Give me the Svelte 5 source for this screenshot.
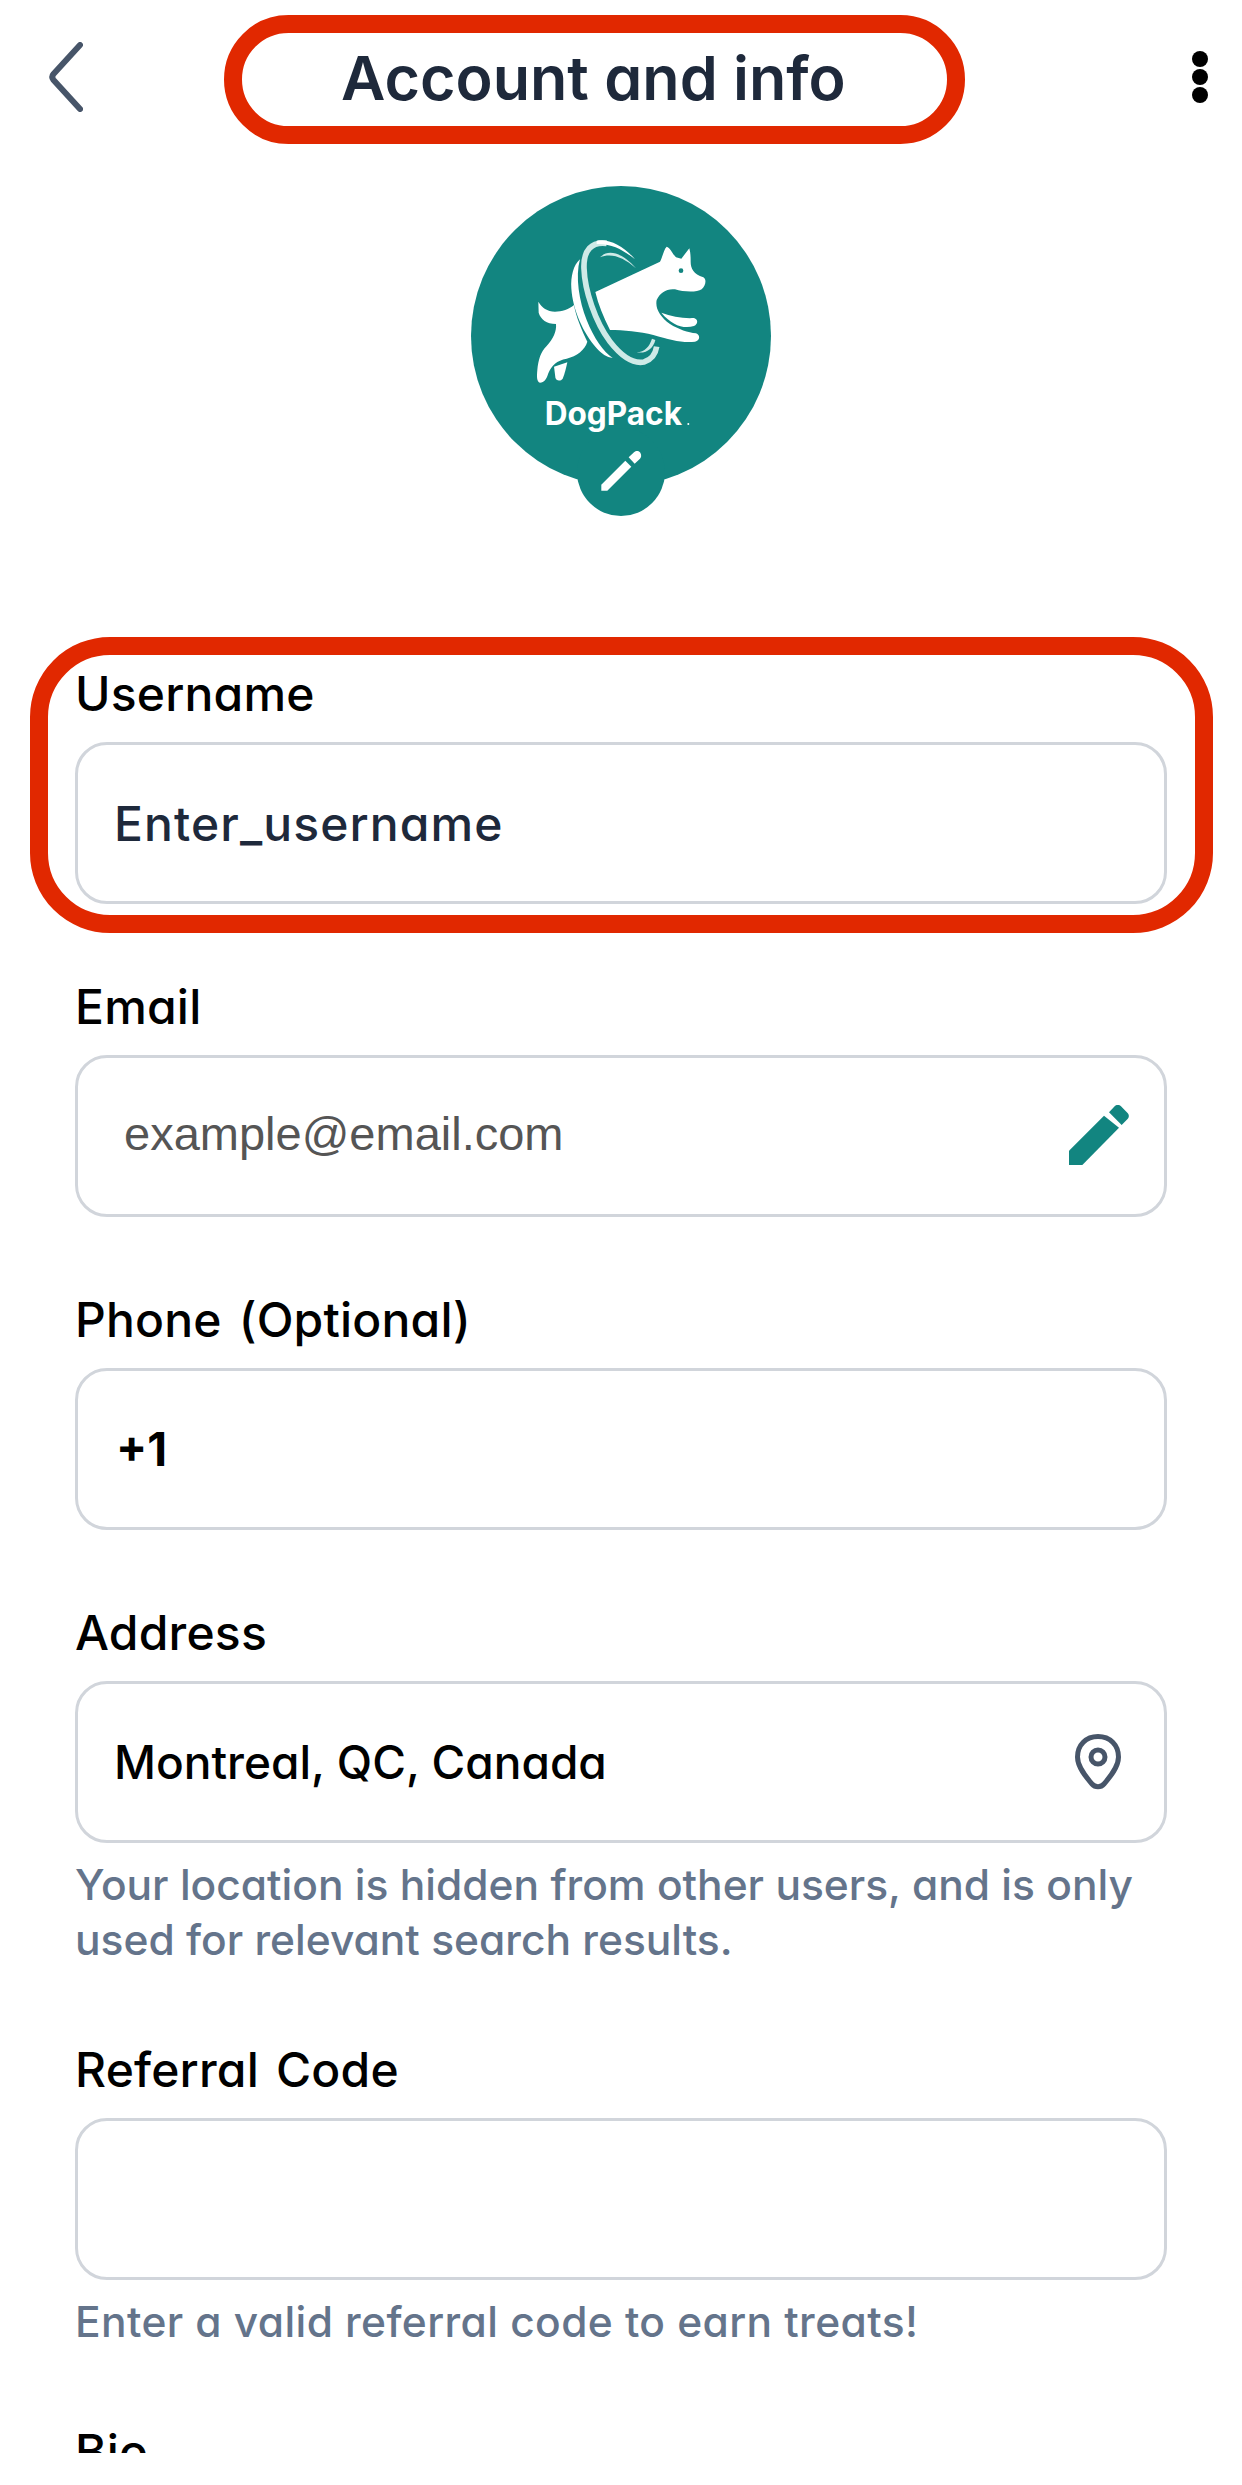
<script>
  const teal = '#128580';
</script>

<div class="page">
  <header class="top">
    <svg class="back" viewBox="0 0 34 70" width="34" height="70" aria-hidden="true">
      <path d="M31 3 L4.5 32 Q2 35 4.5 38 L31 67" fill="none" stroke="#475569" stroke-width="6" stroke-linecap="round" stroke-linejoin="round"/>
    </svg>
    <h1>Account and info</h1>
    <div class="dots"><i></i><i></i><i></i></div>
  </header>

  <svg class="avatar" viewBox="0 0 1080 1080" width="360" height="360">
    <circle cx="543" cy="498" r="450" fill={teal}/>
    <circle cx="543" cy="906" r="132" fill={teal}/>
    <!-- hind quarters -->
    <path fill="#fff" d="M295 395 C305 412 322 425 345 425 C365 425 388 418 402 405 C408 440 425 480 442 515 C435 540 410 558 380 566 C350 572 335 585 325 610 C320 628 312 638 300 638 C290 636 290 620 292 600 C295 570 302 545 320 528 C340 505 350 485 348 462 C320 462 302 448 296 428 Z"/>
    <path fill="#fff" d="M342 590 L382 577 C378 595 374 612 368 626 C362 634 348 634 346 622 Z"/>
    <!-- front of the body -->
    <path fill="#fff" d="M466 366 L660 275 C668 262 670 240 680 230 C690 232 698 252 708 262 L724 266 L748 235 C752 250 752 262 752 276 C752 295 760 312 790 322 C800 328 798 345 785 358 C770 368 730 366 705 358 C680 355 660 368 650 390 C645 415 660 440 690 462 C715 478 745 488 768 490 C782 495 780 512 765 515 C730 520 690 510 640 495 C600 485 550 480 510 480 C490 440 475 405 466 366 Z"/>
    <path fill="#fff" d="M664 428 C695 440 730 446 762 444 C775 448 775 462 762 468 C730 478 695 465 664 428 Z"/>
    <circle cx="723" cy="302" r="7" fill={teal}/>
    <!-- hoop -->
    <path fill="none" stroke="#cfeae7" stroke-width="17" d="M500 220 C455 214 430 240 432 295 C434 360 465 455 510 515 C545 560 580 582 612 576 C632 570 646 555 650 530"/>
    <path fill="#fff" d="M420 268 C400 285 392 320 394 355 C398 420 430 490 470 535 C485 552 500 562 518 564 C490 545 462 505 440 450 C418 395 405 320 420 268 Z"/>
    <path fill="#fff" d="M470 212 C510 205 555 232 585 268 C550 240 515 220 470 222 Z"/>
    <path fill="#cfeae7" d="M480 262 C505 235 550 250 588 295 C550 262 515 248 480 262 Z"/>
    <path fill="#cfeae7" d="M590 547 C615 545 628 530 636 506 L646 510 C640 535 620 552 590 547 Z"/>
    <text x="314" y="765" class="brand" textLength="412" lengthAdjust="spacingAndGlyphs">DogPack</text>
    <circle cx="745" cy="762" r="3" fill="#fff"/>
    <!-- pen -->
    <path fill="#fff" d="M484 944 L556 872 L574 890 L502 962 L484 962 Z"/>
    <path fill="#fff" d="M566 862 L582 847 C588 841 597 842 601 848 C605 855 604 862 600 866 L584 881 Z"/>
  </svg>

  <section class="field">
    <div class="label">Username</div>
    <div class="box"><span class="val dark">Enter_username</span></div>
  </section>

  <section class="field">
    <div class="label">Email</div>
    <div class="box">
      <span class="val email">example@email.com</span>
      <svg class="pen" viewBox="85 78 180 180" width="60" height="60" aria-hidden="true">
        <path fill={teal} d="M85 215 L190 110 L235 146 L125 258 L85 258 Z"/>
        <path fill={teal} d="M205 100 L222 82 C227 76 236 76 241 82 L260 101 C266 107 266 115 260 121 L243 138 Z"/>
      </svg>
    </div>
  </section>

  <section class="field">
    <div class="label">Phone (Optional)</div>
    <div class="box"><span class="val phone">+1</span></div>
  </section>

  <section class="field">
    <div class="label">Address</div>
    <div class="box">
      <span class="val">Montreal, QC, Canada</span>
      <svg class="pin" viewBox="0 0 46 56" width="46" height="56" aria-hidden="true">
        <path d="M23 2.5 C11 2.5 2.5 11 2.5 23 C2.5 33 11 43 17 50 C20 53.5 26 53.5 29 50 C35 43 43.5 33 43.5 23 C43.5 11 35 2.5 23 2.5 Z" fill="none" stroke="#475569" stroke-width="5"/>
        <circle cx="23" cy="23" r="7" fill="none" stroke="#475569" stroke-width="5"/>
      </svg>
    </div>
    <p class="help">Your location is hidden from other users, and is only used for relevant search results.</p>
  </section>

  <section class="field">
    <div class="label">Referral Code</div>
    <div class="box"></div>
    <p class="help wide">Enter a valid referral code to earn treats!</p>
  </section>

  <section class="field">
    <div class="label">Bio</div>
  </section>

  <div class="mark mark-title"></div>
  <div class="mark mark-user"></div>
</div>

<style>
  :global(body) {
    margin: 0;
    background: #fff;
  }
  .page {
    position: relative;
    height: 2453px;
    overflow: hidden;
    font-family: Inter, "Liberation Sans", sans-serif;
    font-feature-settings: "cv11" 1;
    color: #000;
    background: #fff;
  }
  .top {
    display: flex;
    align-items: center;
    height: 154px;
    padding: 0 34px 0 49px;
  }
  .back {
    flex: none;
  }
  h1 {
    margin: 2px 0 0 258px;
    font-size: 61px;
    font-weight: 600;
    line-height: 72px;
    color: #1e293b;
    white-space: nowrap;
  }
  .dots {
    margin-left: auto;
    display: flex;
    flex-direction: column;
    gap: 2px;
  }
  .dots i {
    display: block;
    width: 16px;
    height: 16px;
    border-radius: 50%;
    background: #000;
  }
  .avatar {
    display: block;
    margin: 16px 0 0 440px;
  }
  .field {
    margin: 0 75px 74px;
  }
  .avatar + .field {
    margin-top: 135px;
  }
  .label {
    font-size: 48px;
    line-height: 58px;
    font-weight: 500;
    letter-spacing: 0.2px;
    word-spacing: 4px;
    margin-bottom: 19px;
  }
  .box {
    box-sizing: border-box;
    height: 162px;
    border: 3px solid #d1d5db;
    border-radius: 32px;
    display: flex;
    align-items: center;
    justify-content: space-between;
    padding: 0 43px 0 36px;
  }
  .val {
    font-size: 46px;
    font-weight: 500;
    white-space: nowrap;
  }
  .dark {
    color: #1e293b;
    font-size: 48px;
    letter-spacing: 1.1px;
  }
  .email {
    font-family: "Liberation Sans", sans-serif;
    font-weight: 400;
    font-size: 47px;
    color: #555;
    padding-left: 10px;
    margin-bottom: 6px;
  }
  .phone {
    font-weight: 700;
    padding-left: 2px;
  }
  .pen {
    margin: 0 -8px 2px 0;
  }
  .pin {
    flex: none;
  }
  .help {
    margin: 14px 0 0;
    font-size: 42.5px;
    line-height: 55px;
    font-weight: 500;
    color: #64748b;
  }
  .wide {
    letter-spacing: 0.4px;
  }
  .brand {
    font-family: Inter, "Liberation Sans", sans-serif;
    font-size: 96px;
    font-weight: 700;
    fill: #fff;
    font-feature-settings: normal;
  }
  .mark {
    position: absolute;
    box-sizing: border-box;
    border: 18px solid #e12800;
    pointer-events: none;
  }
  .mark-title {
    left: 224px;
    top: 15px;
    width: 741px;
    height: 129px;
    border-radius: 65px;
  }
  .mark-user {
    left: 30px;
    top: 637px;
    width: 1183px;
    height: 296px;
    border-radius: 80px;
  }
</style>
